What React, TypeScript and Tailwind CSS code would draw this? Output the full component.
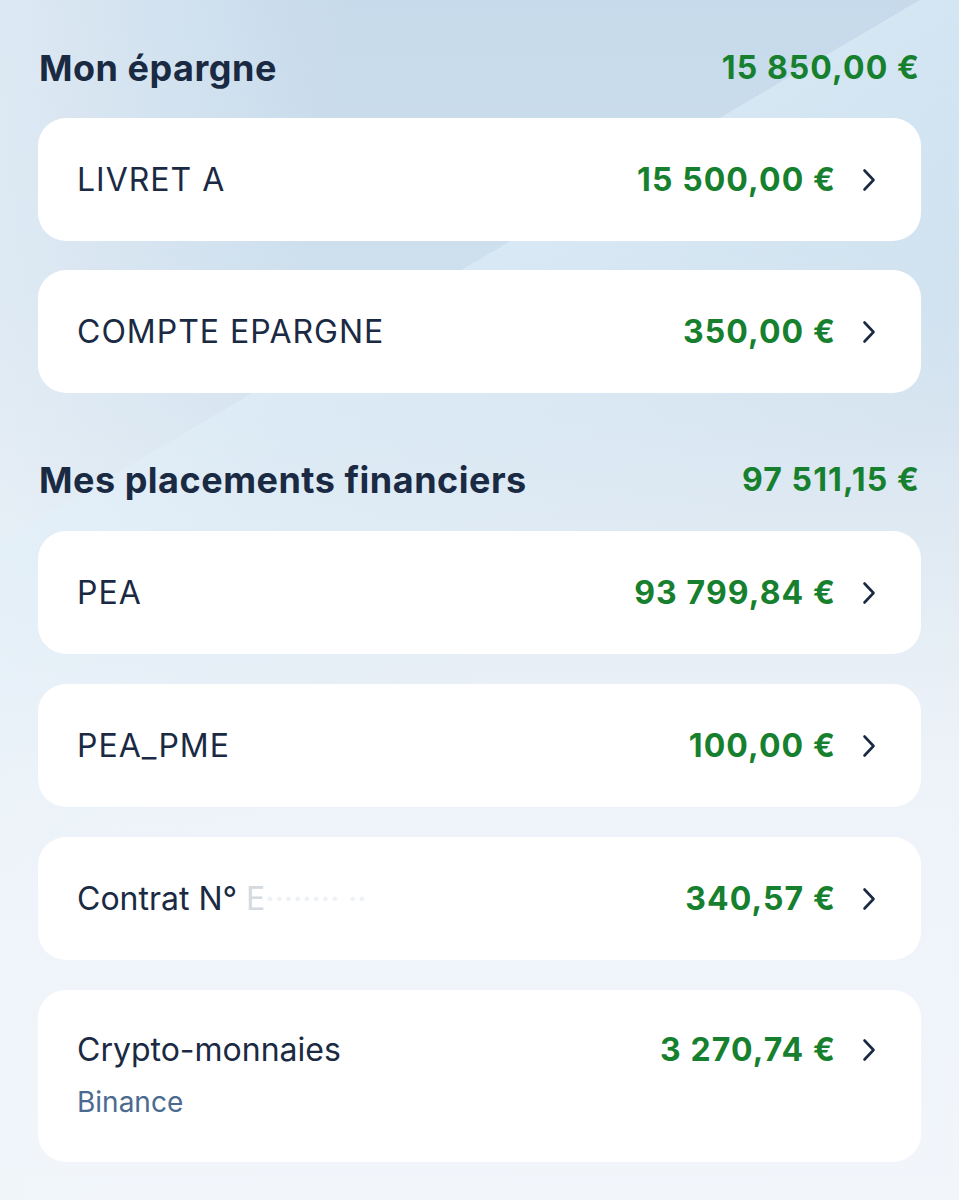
import React from "react";

const Chevron = () => (
  <svg width="18" height="26" viewBox="0 0 18 26" fill="none" className="shrink-0">
    <path d="M4.5 3.5 L13.5 13 L4.5 22.5" stroke="#1b2a43" strokeWidth="2.6" strokeLinecap="round" strokeLinejoin="round" />
  </svg>
);

type Row = { label: React.ReactNode; amount: string; sub?: string; caps?: boolean };

const Card = ({ label, amount, sub, caps }: Row) => (
  <div className={`flex rounded-[28px] bg-white pl-[39px] pr-[43px] ${sub ? "h-[172px] items-start pt-[40px]" : "h-[123px] items-center"}`}>
    <div className="flex flex-1 flex-col">
      <div className={`text-[32px] leading-[40px] text-[#1b2a43] ${caps ? "tracking-[1px]" : "tracking-[0px]"}`}>{label}</div>
      {sub && <div className="mt-[15px] text-[28px] leading-[34px] text-[#4b6a90]">{sub}</div>}
    </div>
    <div className="flex items-center gap-[24px]">
      <span className="text-[32px] font-bold leading-[40px] tracking-[1.1px] text-[#16802f]">{amount}</span>
      <Chevron />
    </div>
  </div>
);

const Header = ({ title, amount }: { title: string; amount: string }) => (
  <div className="flex items-center justify-between px-[1px]">
    <h2 className="text-[36px] font-bold leading-[40px] tracking-[0.5px] text-[#1b2a43]">{title}</h2>
    <span className="text-[32px] font-bold leading-[40px] tracking-[1.1px] text-[#16802f]">{amount}</span>
  </div>
);

export default function App() {
  return (
    <div
      className="relative h-[1200px] w-[959px] overflow-hidden"
      style={{ fontFamily: "Inter, 'Open Sans', sans-serif" }}
    >
      <div className="absolute inset-0 bg-[linear-gradient(180deg,#c6daeb_0%,#cfe0ee_25%,#e0eaf3_45%,#eef3f9_65%,#f2f6fb_100%)]" />
      <div className="absolute inset-0 bg-[linear-gradient(100deg,rgba(240,245,250,0.55)_0%,rgba(240,245,250,0)_30%)]" />
      <div className="absolute inset-0 bg-[linear-gradient(149.5deg,rgba(255,255,255,0)_30.7%,rgba(225,240,250,0.55)_30.7%,rgba(225,240,250,0)_55%)]" />
      <div className="relative flex flex-col px-[38px] pt-[48px]">
        <Header title="Mon épargne" amount="15 850,00 €" />
        <div className="mt-[30px] flex flex-col gap-[29px]">
          <Card label="LIVRET A" amount="15 500,00 €" caps />
          <Card label="COMPTE EPARGNE" amount="350,00 €" caps />
        </div>
        <div className="mt-[67px]">
          <Header title="Mes placements financiers" amount="97 511,15 €" />
        </div>
        <div className="mt-[31px] flex flex-col gap-[30px]">
          <Card label="PEA" amount="93 799,84 €" caps />
          <Card label="PEA_PME" amount="100,00 €" caps />
          <Card
            label={
              <>
                Contrat N° <span className="text-[#d5dae1]">E</span>
                <span className="text-[#eef1f5]">········ ··</span>
              </>
            }
            amount="340,57 €"
          />
          <Card label="Crypto-monnaies" amount="3 270,74 €" sub="Binance" />
        </div>
      </div>
    </div>
  );
}
